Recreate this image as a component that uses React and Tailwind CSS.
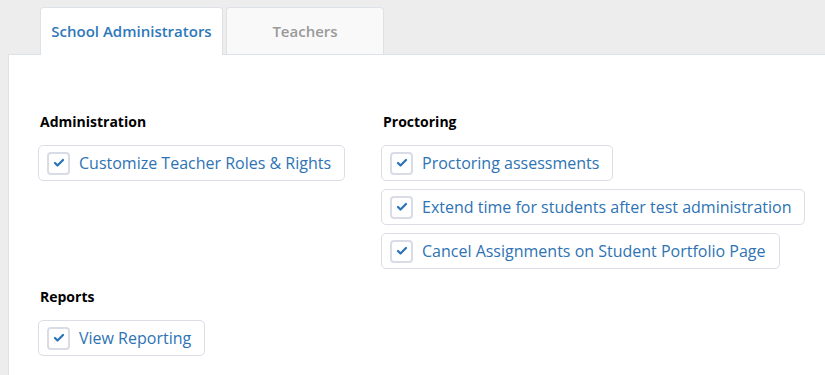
import { Check } from 'lucide-react'

const SECTIONS = [
  { title: 'Administration', items: ['Customize Teacher Roles & Rights'] },
  {
    title: 'Proctoring',
    items: [
      'Proctoring assessments',
      'Extend time for students after test administration',
      'Cancel Assignments on Student Portfolio Page'
    ]
  },
  { title: 'Reports', items: ['View Reporting'] }
]

export default function App() {
  const [admin, proctoring, reports] = SECTIONS
  return (
    <div className="w-[825px] h-[375px] overflow-hidden bg-[#ededed] font-['Open_Sans',sans-serif] pt-[7px]">
      <div className="flex pl-[40px] gap-[3px] relative z-10">
        <div className="w-[183px] h-[48px] bg-white border border-b-0 border-[#dde1e8] rounded-t-[4px] flex items-center justify-center text-[15px] font-semibold text-[#2e78b9]">
          School Administrators
        </div>
        <div className="w-[158px] h-[47px] bg-[#f9f9f9] border border-b-0 border-[#dde1e8] rounded-t-[4px] flex items-center justify-center text-[15px] font-semibold text-[#9a9a9a]">
          Teachers
        </div>
      </div>
      <div className="ml-[8px] -mt-px h-[400px] bg-white border-l border-t border-[#dde1e8] pl-[29px] pt-[57px]">
        <div className="flex">
          <Section section={admin} className="w-[343px]" />
          <Section section={proctoring} />
        </div>
        <Section section={reports} className="mt-[18px]" />
      </div>
    </div>
  )
}

function Section({ section, className = '' }) {
  return (
    <div className={className}>
      <div className="text-[14px] font-bold text-black leading-[20px] pl-[2px]">{section.title}</div>
      <div className="mt-[13px] flex flex-col items-start gap-[8px]">
        {section.items.map((item) => (
          <div
            key={item}
            className="h-[36px] flex items-center gap-[9px] pl-[8px] pr-[13px] border border-[#dbdee6] rounded-[5px] bg-white"
          >
            <span className="w-[23px] h-[23px] rounded-[4px] border-2 border-[#d9dce6] flex items-center justify-center">
              <Check size={12} strokeWidth={4.5} className="text-[#2b74b8]" />
            </span>
            <span className="text-[16px] text-[#2e73b4] leading-none">{item}</span>
          </div>
        ))}
      </div>
    </div>
  )
}
